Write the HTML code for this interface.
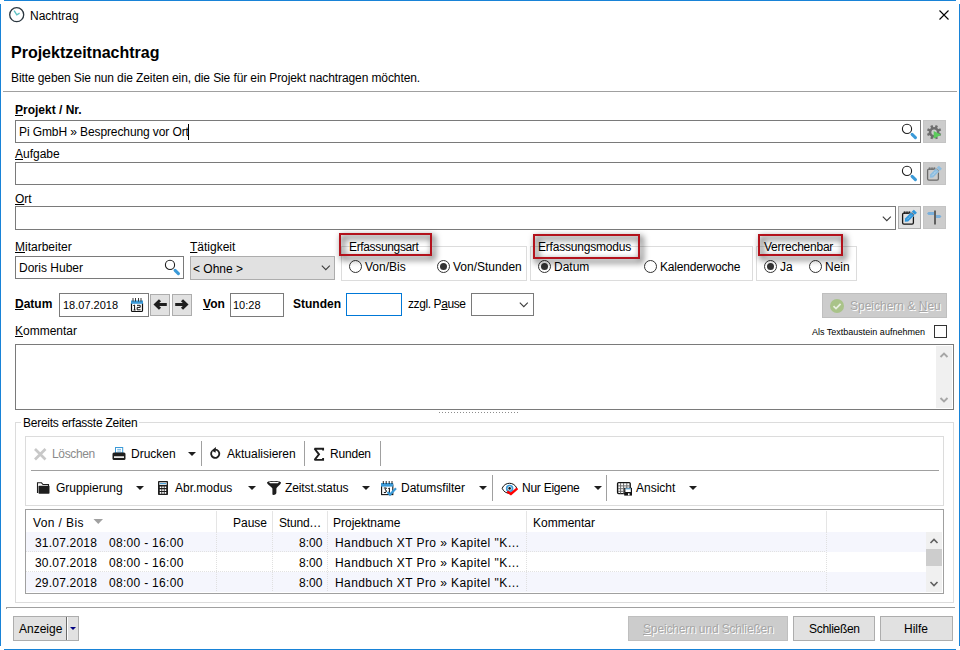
<!DOCTYPE html>
<html><head><meta charset="utf-8">
<style>
html,body{margin:0;padding:0;}
body{width:960px;height:650px;position:relative;overflow:hidden;background:#fff;font-family:"Liberation Sans",sans-serif;font-size:12px;color:#000;}
.a{position:absolute;box-sizing:border-box;}
.t{position:absolute;font-size:12px;line-height:14px;white-space:pre;color:#000;}
.b{font-weight:bold;}
.u{text-decoration:underline;text-underline-offset:1px;}
.box{position:absolute;box-sizing:border-box;border:1px solid #7a7a7a;background:#fff;}
.btn{position:absolute;box-sizing:border-box;border:1px solid #adadad;background:#e1e1e1;}
.dbtn{position:absolute;box-sizing:border-box;border:1px solid #bfbfbf;background:#cccccc;}
.grp{position:absolute;box-sizing:border-box;border:1px solid #dcdcdc;}
.radio{position:absolute;box-sizing:border-box;width:13px;height:13px;border:1px solid #333;border-radius:50%;background:#fff;}
.radio.on::after{content:"";position:absolute;left:2px;top:2px;width:7px;height:7px;border-radius:50%;background:#333;}
.dd{position:absolute;width:0;height:0;border-left:4px solid transparent;border-right:4px solid transparent;border-top:4px solid #1e1e1e;}
.vsep{position:absolute;width:1px;background:#a0a0a0;}
.dis{color:#a6a6a6;text-shadow:1px 1px 0 #fff;}
svg{position:absolute;overflow:visible;}
</style></head><body>

<!-- window frame -->
<div class="a" style="left:4px;top:0;width:952px;height:1px;background:#1883d7"></div>
<div class="a" style="left:0;top:4px;width:1px;height:642px;background:#1883d7"></div>
<div class="a" style="left:959px;top:4px;width:1px;height:642px;background:#1883d7"></div>
<div class="a" style="left:4px;top:649px;width:952px;height:1px;background:#1883d7"></div>

<!-- title bar -->
<svg style="left:9px;top:7px" width="16" height="16" viewBox="0 0 16 16">
<circle cx="7.7" cy="7.7" r="7" fill="none" stroke="#2b3740" stroke-width="1.3"/>
<path d="M5.1 3.6 L7.8 7.8 L10.6 6.2" fill="none" stroke="#5fc2c4" stroke-width="1.4"/>
</svg>
<div class="t" style="left:30px;top:9px">Nachtrag</div>
<svg style="left:939px;top:10px" width="10" height="10" viewBox="0 0 10 10">
<path d="M0.5 0.5 L9.5 9.5 M9.5 0.5 L0.5 9.5" stroke="#000" stroke-width="1.1"/>
</svg>

<!-- header -->
<div class="t b" style="left:11px;top:44px;font-size:16px;line-height:18px">Projektzeitnachtrag</div>
<div class="t" style="left:11px;top:71px;letter-spacing:-0.1px">Bitte geben Sie nun die Zeiten ein, die Sie für ein Projekt nachtragen möchten.</div>
<div class="a" style="left:3px;top:91px;width:954px;height:1px;background:#a0a0a0"></div>

<!-- Projekt -->
<div class="t b" style="left:15px;top:103px"><span class="u">P</span>rojekt / Nr.</div>
<div class="box" style="left:15px;top:120px;width:906px;height:23px"></div>
<div class="t" style="left:19px;top:125px;letter-spacing:-0.1px">Pi GmbH » Besprechung vor Ort</div>
<div class="a" style="left:188px;top:124px;width:1px;height:16px;background:#000"></div>
<svg style="left:900px;top:122px" width="20" height="20" viewBox="0 0 20 20">
<circle cx="7" cy="6.9" r="4.6" fill="none" stroke="#1e1e1e" stroke-width="1.1"/>
<path d="M12.1 12.4 L15.4 15.6" stroke="#3b9ad8" stroke-width="3.1" stroke-linecap="round"/>
</svg>
<div class="btn" style="left:923px;top:120px;width:23px;height:23px;background:#cccccc;border-color:#c4c4c4"></div>
<svg style="left:923px;top:120px" width="23" height="23" viewBox="0 0 23 23">
<g transform="translate(11.1,12.2)" fill="#6e6e6e">
<circle r="5.3"/><rect x="-1.2" y="-7.2" width="2.4" height="3.2" transform="rotate(22.5)"/><rect x="-1.2" y="-7.2" width="2.4" height="3.2" transform="rotate(67.5)"/><rect x="-1.2" y="-7.2" width="2.4" height="3.2" transform="rotate(112.5)"/><rect x="-1.2" y="-7.2" width="2.4" height="3.2" transform="rotate(157.5)"/><rect x="-1.2" y="-7.2" width="2.4" height="3.2" transform="rotate(202.5)"/><rect x="-1.2" y="-7.2" width="2.4" height="3.2" transform="rotate(247.5)"/><rect x="-1.2" y="-7.2" width="2.4" height="3.2" transform="rotate(292.5)"/><rect x="-1.2" y="-7.2" width="2.4" height="3.2" transform="rotate(337.5)"/>
<circle r="2.7" fill="#cdcdcd"/>
</g>
<path d="M10.7 10.9 L18.1 14.8 L10.7 18.8 Z" fill="#5ccc5c"/>
</svg>

<!-- Aufgabe -->
<div class="t" style="left:15px;top:147px"><span class="u">A</span>ufgabe</div>
<div class="box" style="left:15px;top:162px;width:906px;height:23px"></div>
<svg style="left:900px;top:164px" width="20" height="20" viewBox="0 0 20 20">
<circle cx="7" cy="6.9" r="4.6" fill="none" stroke="#1e1e1e" stroke-width="1.1"/>
<path d="M12.1 12.4 L15.4 15.6" stroke="#3b9ad8" stroke-width="3.1" stroke-linecap="round"/>
</svg>
<div class="btn" style="left:923px;top:162px;width:23px;height:23px;background:#cccccc;border-color:#c4c4c4"></div>
<svg style="left:923px;top:162px" width="23" height="23" viewBox="0 0 23 23">
<rect x="4.6" y="7.1" width="10.8" height="11" rx="1.3" fill="none" stroke="#6a6a6a" stroke-width="1.3"/>
<path d="M6.3 5.3 V8 M8.1 5.3 V8 M9.9 5.3 V8 M11.7 5.3 V8" stroke="#6a6a6a" stroke-width="1"/>
<path d="M6.8 15.8 L7.0 12.5 L13.0 6.5 L16.1 9.6 L10.1 15.6 Z" fill="#8dbde0" stroke="#cccccc" stroke-width="0.8" paint-order="stroke"/>
<path d="M13.7 5.75 L15.84 3.63 L18.96 6.75 L16.84 8.87 Z" fill="#8dbde0" stroke="#cccccc" stroke-width="0.8" paint-order="stroke"/>
<path d="M9.3 13.3 L13.3 9.3" stroke="#fff" stroke-width="0.8" stroke-dasharray="1.2 0.8" opacity="0.8"/>
</svg>

<!-- Ort -->
<div class="t" style="left:15px;top:192px"><span class="u">O</span>rt</div>
<div class="box" style="left:15px;top:206px;width:881px;height:24px"></div>
<svg style="left:882px;top:216px" width="10" height="6" viewBox="0 0 10 6">
<path d="M0.8 0.6 L4.8 4.6 L8.8 0.6" fill="none" stroke="#3c3c3c" stroke-width="1.1"/>
</svg>
<div class="btn" style="left:898px;top:206px;width:23px;height:23px"></div>
<svg style="left:898px;top:206px" width="23" height="23" viewBox="0 0 23 23">
<rect x="4.6" y="7.1" width="10.8" height="11" rx="1.3" fill="none" stroke="#151515" stroke-width="1.3"/>
<path d="M6.3 5.3 V8 M8.1 5.3 V8 M9.9 5.3 V8 M11.7 5.3 V8" stroke="#151515" stroke-width="1"/>
<path d="M6.8 15.8 L7.0 12.5 L13.0 6.5 L16.1 9.6 L10.1 15.6 Z" fill="#3097dc" stroke="#e1e1e1" stroke-width="0.8" paint-order="stroke"/>
<path d="M13.7 5.75 L15.84 3.63 L18.96 6.75 L16.84 8.87 Z" fill="#3097dc" stroke="#e1e1e1" stroke-width="0.8" paint-order="stroke"/>
<path d="M9.3 13.3 L13.3 9.3" stroke="#fff" stroke-width="0.8" stroke-dasharray="1.2 0.8" opacity="0.8"/>
</svg>
<div class="btn" style="left:923px;top:206px;width:23px;height:23px;background:#cccccc;border-color:#c4c4c4"></div>
<svg style="left:923px;top:206px" width="23" height="23" viewBox="0 0 23 23">
<rect x="11" y="4.5" width="2" height="14" fill="#606060"/>
<path d="M4 7.5 L5.5 6 L11 6 L11 9 L5.5 9 Z" fill="#7ab0dc"/>
<path d="M13 9 L17 9 L18.5 10.5 L17 12 L13 12 Z" fill="#7ab0dc"/>
</svg>

<!-- Mitarbeiter / Taetigkeit -->
<div class="t" style="left:15px;top:240px"><span class="u">M</span>itarbeiter</div>
<div class="box" style="left:15px;top:256px;width:169px;height:23px"></div>
<div class="t" style="left:19px;top:261px">Doris Huber</div>
<svg style="left:163px;top:258px" width="20" height="20" viewBox="0 0 20 20">
<circle cx="7" cy="6.9" r="4.6" fill="none" stroke="#1e1e1e" stroke-width="1.1"/>
<path d="M12.1 12.4 L15.4 15.6" stroke="#3b9ad8" stroke-width="3.1" stroke-linecap="round"/>
</svg>
<div class="t" style="left:190px;top:240px"><span class="u">T</span>ätigkeit</div>
<div class="btn" style="left:190px;top:256px;width:145px;height:24px"></div>
<div class="t" style="left:193px;top:262px">&lt; Ohne &gt;</div>
<svg style="left:321px;top:265px" width="10" height="6" viewBox="0 0 10 6">
<path d="M0.8 0.6 L4.8 4.6 L8.8 0.6" fill="none" stroke="#3c3c3c" stroke-width="1.1"/>
</svg>

<!-- group boxes -->
<div class="grp" style="left:341px;top:246px;width:186px;height:35px"></div>
<div class="grp" style="left:530px;top:246px;width:223px;height:35px"></div>
<div class="grp" style="left:756px;top:246px;width:101px;height:35px"></div>

<div class="t" style="left:349px;top:240px;letter-spacing:-0.35px">Erfassungsart</div>
<div class="radio" style="left:349px;top:260px"></div>
<div class="t" style="left:365px;top:260px">Von/Bis</div>
<div class="radio on" style="left:437px;top:260px"></div>
<div class="t" style="left:453px;top:260px">Von/Stunden</div>

<div class="t" style="left:538px;top:240px;letter-spacing:-0.2px">Erfassungsmodus</div>
<div class="radio on" style="left:538px;top:260px"></div>
<div class="t" style="left:554px;top:260px">Datum</div>
<div class="radio" style="left:644px;top:260px"></div>
<div class="t" style="left:660px;top:260px;letter-spacing:-0.2px">Kalenderwoche</div>

<div class="t" style="left:764px;top:240px;letter-spacing:-0.25px">Verrechenbar</div>
<div class="radio on" style="left:764px;top:260px"></div>
<div class="t" style="left:780px;top:260px">Ja</div>
<div class="radio" style="left:809px;top:260px"></div>
<div class="t" style="left:825px;top:260px">Nein</div>

<!-- Datum row -->
<div class="t b" style="left:15px;top:297px"><span class="u">D</span>atum</div>
<div class="box" style="left:59px;top:293px;width:90px;height:24px"></div>
<div class="t" style="left:63px;top:298px;font-size:11px">18.07.2018</div>
<svg style="left:130px;top:297px" width="14" height="16" viewBox="0 0 14 16">
<rect x="1.5" y="5" width="11" height="9.5" rx="1" fill="#fff" stroke="#111" stroke-width="1.2"/>
<rect x="1" y="3.5" width="12" height="3.3" fill="#3b9ad8"/>
<path d="M3 1 V4.5 M5.5 1 V4.5 M8.5 1 V4.5 M11 1 V4.5" stroke="#222" stroke-width="0.9"/>
<path d="M3.3 8.6 L4.6 8 V13 M3.5 13 H5.6 M7 8.3 H10.2 V10.4 H7.2 V12.8 H10.6" fill="none" stroke="#111" stroke-width="1"/>
</svg>
<div class="btn" style="left:150px;top:294px;width:20px;height:22px"></div>
<svg style="left:150px;top:294px" width="20" height="22" viewBox="0 0 20 22">
<path d="M16.8 10.5 H5.5 M10 6.2 L5.6 10.5 L10 14.8" fill="none" stroke="#1e1e1e" stroke-width="3"/>
</svg>
<div class="btn" style="left:172px;top:294px;width:20px;height:22px"></div>
<svg style="left:172px;top:294px" width="20" height="22" viewBox="0 0 20 22">
<path d="M3.2 10.5 H14.5 M10 6.2 L14.4 10.5 L10 14.8" fill="none" stroke="#1e1e1e" stroke-width="3"/>
</svg>
<div class="t b" style="left:203px;top:297px"><span class="u">V</span>on</div>
<div class="box" style="left:230px;top:293px;width:54px;height:24px"></div>
<div class="t" style="left:233px;top:298px;font-size:11px">10:28</div>
<div class="t b" style="left:293px;top:297px">Stunden</div>
<div class="box" style="left:346px;top:293px;width:56px;height:23px;border-color:#0078d7"></div>
<div class="t" style="left:408px;top:297px;letter-spacing:-0.4px">zzgl. P<span class="u">a</span>use</div>
<div class="box" style="left:471px;top:293px;width:63px;height:23px"></div>
<svg style="left:519px;top:302px" width="10" height="6" viewBox="0 0 10 6">
<path d="M0.8 0.6 L4.8 4.6 L8.8 0.6" fill="none" stroke="#3c3c3c" stroke-width="1.1"/>
</svg>

<div class="dbtn" style="left:822px;top:293px;width:125px;height:25px"></div>
<svg style="left:829px;top:298px" width="16" height="16" viewBox="0 0 16 16">
<circle cx="8" cy="8" r="7" fill="#a9c389"/>
<path d="M4.5 8.2 L7 10.6 L11.6 5.8" fill="none" stroke="#e8eee0" stroke-width="1.8"/>
</svg>
<div class="t dis" style="left:850px;top:299px">Speichern &amp; <span class="u">N</span>eu</div>

<!-- Kommentar -->
<div class="t" style="left:15px;top:324px"><span class="u">K</span>ommentar</div>
<div class="t" style="left:812px;top:327px;font-size:9px;line-height:11px">Als Textbaustein aufnehmen</div>
<div class="a" style="left:934px;top:325px;width:13px;height:13px;border:1px solid #333"></div>
<div class="box" style="left:15px;top:344px;width:939px;height:66px"></div>
<div class="a" style="left:936px;top:346px;width:16px;height:62px;background:#f0f0f0"></div>
<svg style="left:936px;top:346px" width="16" height="62" viewBox="0 0 16 62">
<path d="M4.5 11 L8 7.5 L11.5 11" fill="none" stroke="#a6a6a6" stroke-width="1.9"/>
<path d="M4.5 52 L8 55.5 L11.5 52" fill="none" stroke="#a6a6a6" stroke-width="1.9"/>
</svg>

<!-- splitter dots -->
<div class="a" style="left:439px;top:412px;width:80px;height:1px;background-image:linear-gradient(90deg,#8c8c8c 33.4%,transparent 33.4%);background-size:3px 1px"></div>

<!-- Bereits erfasste Zeiten -->
<div class="grp" style="left:15px;top:422px;width:939px;height:181px"></div>
<div class="a" style="left:21px;top:416px;width:118px;height:14px;background:#fff"></div>
<div class="t" style="left:23px;top:416px;letter-spacing:-0.25px">Bereits erfasste Zeiten</div>
<div class="a" style="left:25px;top:436px;width:919px;height:70px;border:1px solid #dcdcdc;background:#fff"></div>
<div class="a" style="left:31px;top:470px;width:908px;height:1px;background:#a0a0a0"></div>

<!-- toolbar row 1 -->
<svg style="left:33px;top:447px" width="14" height="14" viewBox="0 0 14 14">
<path d="M2 2 L12.5 12.5 M12.5 2 L2 12.5" stroke="#c8c8c8" stroke-width="2.7"/>
</svg>
<div class="t" style="left:52px;top:447px;color:#8a8a8a;letter-spacing:-0.35px">Löschen</div>
<svg style="left:111px;top:446px" width="16" height="15" viewBox="0 0 16 15">
<rect x="4.5" y="1.5" width="7.2" height="5.5" fill="#fff" stroke="#3b9ad8" stroke-width="1"/>
<path d="M6.2 3.4 H10 M6.2 5.1 H10" stroke="#3b9ad8" stroke-width="0.7"/>
<rect x="1.5" y="6.5" width="13" height="7.5" rx="1.5" fill="#1e1e1e"/>
<rect x="3" y="10.3" width="10" height="1.6" fill="#fff"/>
</svg>
<div class="t" style="left:131px;top:447px">Drucken</div>
<div class="dd" style="left:188px;top:452px"></div>
<div class="vsep" style="left:201px;top:441px;height:25px"></div>
<svg style="left:207px;top:446px" width="15" height="15" viewBox="0 0 15 15">
<path d="M8.2 3.7 A4.1 4.1 0 1 1 5.2 5" fill="none" stroke="#1e1e1e" stroke-width="1.8"/>
<path d="M4.6 4.4 L8.9 1.1 L8.6 6.7 Z" fill="#1e1e1e"/>
</svg>
<div class="t" style="left:227px;top:447px">Aktualisieren</div>
<div class="vsep" style="left:304px;top:441px;height:25px"></div>
<svg style="left:312px;top:447px" width="13" height="15" viewBox="0 0 13 15">
<path d="M11.1 3.6 V1.75 H2.6 L7 7.3 L2.6 12.85 H11.1 V11" fill="none" stroke="#1e1e1e" stroke-width="1.9" stroke-linejoin="miter" stroke-miterlimit="2"/>
</svg>
<div class="t" style="left:330px;top:447px;letter-spacing:-0.2px">Runden</div>
<div class="vsep" style="left:380px;top:441px;height:25px"></div>

<!-- toolbar row 2 -->
<svg style="left:36px;top:481px" width="15" height="14" viewBox="0 0 15 14">
<path d="M1.5 12 V1.8 H5.5 L7 3.5 H12.5 V5" fill="none" stroke="#1e1e1e" stroke-width="1.1"/>
<rect x="2.5" y="4.8" width="11" height="8" rx="0.8" fill="#1e1e1e"/>
</svg>
<div class="t" style="left:56px;top:481px">Gruppierung</div>
<div class="dd" style="left:136px;top:486px"></div>
<svg style="left:157px;top:480px" width="12" height="16" viewBox="0 0 12 16">
<rect x="1" y="1" width="10" height="14" rx="0.8" fill="#1e1e1e"/>
<rect x="2.3" y="2.3" width="7.4" height="2.6" fill="#fff"/>
<rect x="2.8" y="3.1" width="6.4" height="1" fill="#3b9ad8"/>
<path d="M2.8 6.5 h1.6v1.6h-1.6z M5.2 6.5 h1.6v1.6h-1.6z M7.6 6.5 h1.6v1.6h-1.6z M2.8 9.3 h1.6v1.6h-1.6z M5.2 9.3 h1.6v1.6h-1.6z M7.6 9.3 h1.6v1.6h-1.6z M2.8 12.1 h1.6v1.6h-1.6z M5.2 12.1 h1.6v1.6h-1.6z M7.6 12.1 h1.6v1.6h-1.6z" fill="#fff"/>
</svg>
<div class="t" style="left:175px;top:481px">Abr.modus</div>
<div class="dd" style="left:248px;top:486px"></div>
<svg style="left:266px;top:480px" width="16" height="16" viewBox="0 0 16 16">
<path d="M1 2.6 C1 0.5 15 0.5 15 2.6 C15 4.8 11.2 6.3 10.4 8.6 V12.6 C10.4 14.2 9.4 15 7.2 15 C6.7 15 6.4 14.6 6.4 14 V8.6 C5.4 6.3 1 4.8 1 2.6 Z" fill="#1e1e1e"/>
<ellipse cx="8" cy="2.5" rx="4.9" ry="0.85" fill="#fff"/>
</svg>
<div class="t" style="left:285px;top:481px;letter-spacing:-0.1px">Zeitst.status</div>
<div class="dd" style="left:362px;top:486px"></div>
<svg style="left:380px;top:480px" width="18" height="16" viewBox="0 0 18 16">
<rect x="1.6" y="5" width="11.2" height="9.6" fill="#fff" stroke="#111" stroke-width="1.1"/>
<rect x="1" y="3" width="12.2" height="3.6" fill="#3b9ad8"/>
<path d="M3.3 1 V4 M6.2 1 V4 M9.2 1 V4 M12 1 V4" stroke="#111" stroke-width="0.9"/>
<path d="M3.8 8 H6.5 L5 9.8 Q7 10 6.2 12 Q5 13.2 3.8 12.4 M8.3 8.6 L9.4 8 V13" fill="none" stroke="#111" stroke-width="1"/>
<path d="M7.5 12 L10 14.6 L16 8.3" fill="none" stroke="#3b9ad8" stroke-width="2.2"/>
</svg>
<div class="t" style="left:401px;top:481px">Datumsfilter</div>
<div class="dd" style="left:479px;top:486px"></div>
<div class="vsep" style="left:492px;top:475px;height:26px"></div>
<svg style="left:501px;top:481px" width="18" height="15" viewBox="0 0 18 15">
<path d="M1.2 7.3 C3.8 0.6 13.2 0.6 15.8 7.3 C13.2 14 3.8 14 1.2 7.3 Z" fill="#fff" stroke="#111" stroke-width="1"/>
<circle cx="8.6" cy="7.4" r="2.9" fill="none" stroke="#3b9ad8" stroke-width="1.7"/>
<circle cx="8.6" cy="7.4" r="1.3" fill="#111"/>
<path d="M6.2 10.4 L9.9 13 L16.4 7.4" fill="none" stroke="#f00" stroke-width="2.4"/>
</svg>
<div class="t" style="left:522px;top:481px;letter-spacing:-0.25px">Nur Eigene</div>
<div class="dd" style="left:594px;top:486px"></div>
<div class="vsep" style="left:606px;top:475px;height:26px"></div>
<svg style="left:616px;top:481px" width="18" height="16" viewBox="0 0 18 16">
<rect x="1.6" y="1.6" width="12.6" height="11" rx="1" fill="#fff" stroke="#151515" stroke-width="1.4"/>
<path d="M2 4.9 H14 M2 7.7 H14 M2 10.3 H14 M4.6 2 V12.5 M7.6 2 V12.5 M10.8 2 V12.5" stroke="#6a6a6a" stroke-width="1"/>
<rect x="8.2" y="6.8" width="7.8" height="7.8" fill="#151515"/>
<rect x="9.4" y="7.4" width="5.4" height="3.6" fill="#fff"/>
<rect x="9.4" y="7.4" width="5.4" height="0.9" fill="#3b9ad8"/>
<rect x="12" y="12.3" width="1.6" height="2" fill="#fff"/>
</svg>
<div class="t" style="left:636px;top:481px">Ansicht</div>
<div class="dd" style="left:689px;top:486px"></div>

<!-- grid -->
<div class="a" style="left:25px;top:509px;width:919px;height:85px;border:1px solid #a0a0a0;background:#fff"></div>
<div class="a" style="left:26px;top:532px;width:900px;height:20px;background:#f5f6fd"></div>
<div class="a" style="left:26px;top:572px;width:900px;height:20px;background:#f5f6fd"></div>
<div class="a" style="left:26px;top:551px;width:800px;height:1px;background-image:linear-gradient(90deg,#e2e2e2 50%,transparent 50%);background-size:2px 1px"></div>
<div class="a" style="left:26px;top:571px;width:800px;height:1px;background-image:linear-gradient(90deg,#e2e2e2 50%,transparent 50%);background-size:2px 1px"></div>
<div class="a" style="left:216px;top:511px;width:1px;height:21px;background:#e5e5e5"></div>
<div class="a" style="left:272px;top:511px;width:1px;height:21px;background:#e5e5e5"></div>
<div class="a" style="left:327px;top:511px;width:1px;height:21px;background:#e5e5e5"></div>
<div class="a" style="left:526px;top:511px;width:1px;height:21px;background:#e5e5e5"></div>
<div class="a" style="left:826px;top:511px;width:1px;height:21px;background:#e5e5e5"></div>
<div class="a" style="left:216px;top:532px;width:1px;height:60px;background-image:linear-gradient(180deg,#e0e0e0 50%,transparent 50%);background-size:1px 2px"></div>
<div class="a" style="left:272px;top:532px;width:1px;height:60px;background-image:linear-gradient(180deg,#e0e0e0 50%,transparent 50%);background-size:1px 2px"></div>
<div class="a" style="left:327px;top:532px;width:1px;height:60px;background-image:linear-gradient(180deg,#e0e0e0 50%,transparent 50%);background-size:1px 2px"></div>
<div class="a" style="left:526px;top:532px;width:1px;height:60px;background-image:linear-gradient(180deg,#e0e0e0 50%,transparent 50%);background-size:1px 2px"></div>
<div class="a" style="left:826px;top:532px;width:1px;height:60px;background-image:linear-gradient(180deg,#e0e0e0 50%,transparent 50%);background-size:1px 2px"></div>

<div class="t" style="left:33px;top:516px;letter-spacing:0.4px">Von / Bis</div>
<svg style="left:93px;top:518px" width="11" height="7" viewBox="0 0 11 7">
<path d="M0.5 1 L10 1 L5.25 6 Z" fill="#a0a0a0"/>
</svg>
<div class="t" style="left:233px;top:516px">Pause</div>
<div class="t" style="left:279px;top:516px;letter-spacing:-0.2px">Stund…</div>
<div class="t" style="left:333px;top:516px">Projektname</div>
<div class="t" style="left:533px;top:516px">Kommentar</div>

<div class="t" style="left:35px;letter-spacing:0.2px;top:536px">31.07.2018</div>
<div class="t" style="left:109px;top:536px;letter-spacing:0.3px">08:00 - 16:00</div>
<div class="t" style="left:299px;top:536px">8:00</div>
<div class="t" style="left:335px;top:536px;letter-spacing:0.42px">Handbuch XT Pro » Kapitel "K…</div>
<div class="t" style="left:35px;letter-spacing:0.2px;top:556px">30.07.2018</div>
<div class="t" style="left:109px;top:556px;letter-spacing:0.3px">08:00 - 16:00</div>
<div class="t" style="left:299px;top:556px">8:00</div>
<div class="t" style="left:335px;top:556px;letter-spacing:0.42px">Handbuch XT Pro » Kapitel "K…</div>
<div class="t" style="left:35px;letter-spacing:0.2px;top:576px">29.07.2018</div>
<div class="t" style="left:109px;top:576px;letter-spacing:0.3px">08:00 - 16:00</div>
<div class="t" style="left:299px;top:576px">8:00</div>
<div class="t" style="left:335px;top:576px;letter-spacing:0.42px">Handbuch XT Pro » Kapitel "K…</div>

<div class="a" style="left:926px;top:532px;width:16px;height:60px;background:#f0f0f0"></div>
<div class="a" style="left:926px;top:549px;width:16px;height:17px;background:#cdcdcd"></div>
<svg style="left:926px;top:532px" width="16" height="60" viewBox="0 0 16 60">
<path d="M4.5 11 L8 7.5 L11.5 11" fill="none" stroke="#606060" stroke-width="1.6"/>
<path d="M4.5 50 L8 53.5 L11.5 50" fill="none" stroke="#606060" stroke-width="1.6"/>
</svg>

<!-- bottom -->
<div class="a" style="left:6px;top:607px;width:949px;height:1px;background:#a0a0a0"></div>
<div class="a" style="left:6px;top:607px;width:1px;height:2px;background:#a0a0a0"></div>
<div class="btn" style="left:13px;top:616px;width:66px;height:25px"></div>
<div class="a" style="left:66px;top:617px;width:1px;height:23px;background:#6a6a6a"></div>
<div class="a" style="left:67px;top:617px;width:1px;height:23px;background:#fff"></div>
<div class="a" style="left:70px;top:627px;width:0;height:0;border-left:3px solid transparent;border-right:3px solid transparent;border-top:3px solid #000080"></div>
<div class="t" style="left:19px;top:622px">Anzeige</div>
<div class="dbtn" style="left:628px;top:616px;width:160px;height:25px"></div>
<div class="t dis" style="left:643px;top:622px;letter-spacing:-0.15px"><span class="u">S</span>peichern und Schließen</div>
<div class="btn" style="left:793px;top:616px;width:82px;height:25px"></div>
<div class="t" style="left:809px;top:622px;letter-spacing:-0.3px">Schließen</div>
<div class="btn" style="left:880px;top:616px;width:73px;height:25px"></div>
<div class="t" style="left:904px;top:622px">Hilfe</div>

<!-- red annotation boxes -->
<svg style="left:0;top:0" width="960" height="650" viewBox="0 0 960 650">
<defs><filter id="sh" x="-50%" y="-50%" width="200%" height="200%"><feGaussianBlur stdDeviation="3"/></filter></defs>
<g filter="url(#sh)" fill="none" stroke="#000" stroke-opacity="0.65" stroke-width="3.2">
<rect x="342.5" y="237" width="91" height="21"/>
<rect x="536.5" y="238" width="105" height="23"/>
<rect x="761.5" y="238" width="83" height="20"/>
</g>
<g fill="none" stroke="#b3121c" stroke-width="2">
<rect x="340" y="234" width="91" height="21"/>
<rect x="534" y="235" width="105" height="23"/>
<rect x="759" y="235" width="83" height="20"/>
</g>
</svg>

</body></html>
